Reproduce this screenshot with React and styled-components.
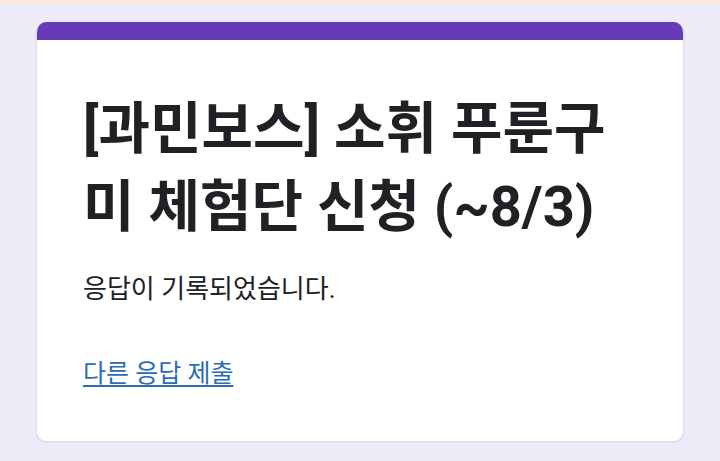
import React from "react";
import styled, { createGlobalStyle } from "styled-components";

const GlobalStyle = createGlobalStyle`
  html, body {
    margin: 0;
    padding: 0;
    background-color: #f0ebf8;
  }
  body {
    font-family: Roboto, "Noto Sans CJK KR", "Noto Sans", sans-serif;
  }
`;

const Page = styled.div`
  width: 720px;
  height: 461px;
  display: flex;
  flex-direction: column;
  overflow: hidden;
`;

const TopStrip = styled.div`
  height: 3px;
  background-color: #fde9cf;
`;

const Main = styled.div`
  padding: 19px 36px 0 36px;
`;

const Card = styled.div`
  background-color: #fff;
  border: 1px solid #dadce0;
  border-top: none;
  border-radius: 10px;
  overflow: hidden;
  box-shadow: 0 1px 2px rgba(60, 64, 67, 0.08);
`;

const Accent = styled.div`
  height: 18px;
  background-color: #673ab7;
`;

const Body = styled.div`
  padding: 50px 46px 49px 46px;
`;

const Title = styled.h1`
  margin: 0;
  font-size: 56px;
  line-height: 78px;
  font-weight: 700;
  color: #202124;
  letter-spacing: 0;
`;

const Message = styled.p`
  margin: 25px 0 0 0;
  font-size: 26px;
  line-height: 36px;
  color: #202124;
`;

const AnotherLink = styled.a`
  display: inline-block;
  margin-top: 49px;
  font-size: 25px;
  line-height: 36px;
  color: #2b6cb5;
  text-decoration: underline;
  text-underline-offset: 3px;
  cursor: pointer;
`;

const App = () => {
  return (
    <Page>
      <GlobalStyle />
      <TopStrip />
      <Main>
        <Card>
          <Accent />
          <Body>
            <Title>[과민보스] 소휘 푸룬구미 체험단 신청 (~8/3)</Title>
            <Message>응답이 기록되었습니다.</Message>
            <AnotherLink href="#">다른 응답 제출</AnotherLink>
          </Body>
        </Card>
      </Main>
    </Page>
  );
};

export default App;
